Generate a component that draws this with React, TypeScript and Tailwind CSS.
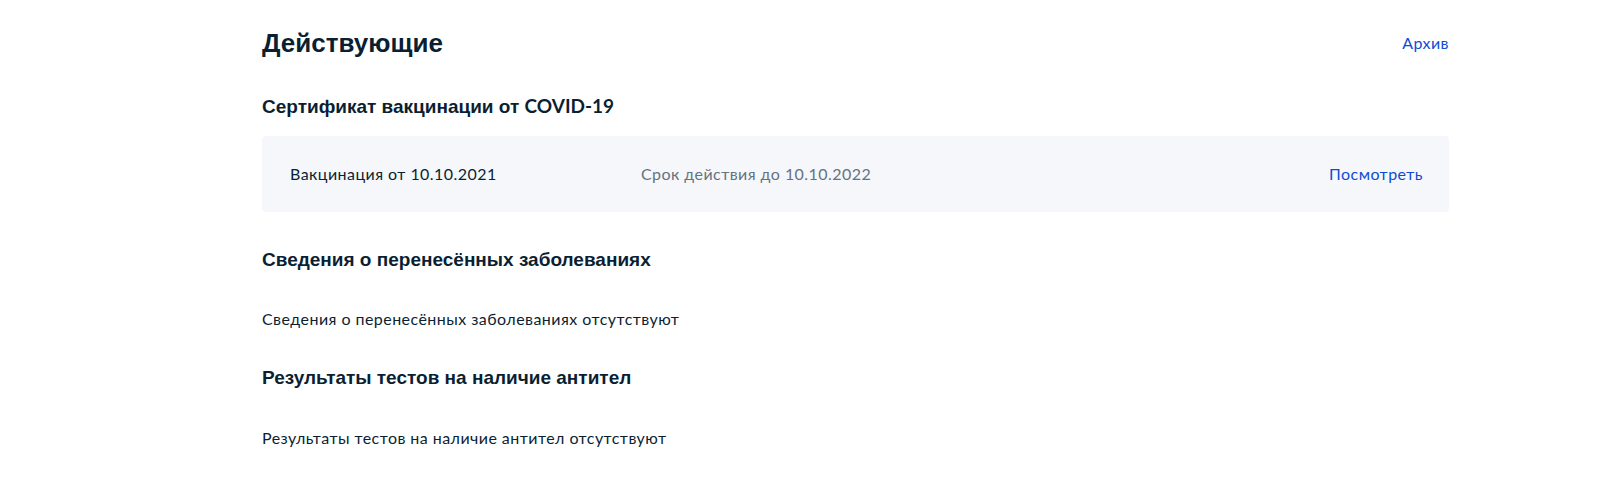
const lato = { fontFamily: "Lato, 'Noto Sans', sans-serif" }
const arial = { fontFamily: "'Liberation Sans', Arial, sans-serif" }

const Section = ({ title, text, gap, textGap }: { title: string; text: string; gap: string; textGap: string }) => (
  <div className={gap}>
    <h3 className="text-[19px] leading-[24px] font-bold text-[#0b1f33]" style={arial}>
      {title}
    </h3>
    <p className={`${textGap} text-[16px] leading-[24px] tracking-[0.45px] text-[#0b1f33]`}>{text}</p>
  </div>
)

export default function App() {
  return (
    <div className="min-h-[482px] bg-white" style={lato}>
      <div className="ml-[262px] w-[1187px] pt-[27px]">
        <div className="flex items-center justify-between">
          <h2 className="text-[26px] leading-[32px] font-bold text-[#0b1f33]" style={arial}>
            Действующие
          </h2>
          <a href="#" className="text-[16px] leading-[24px] tracking-[0.45px] text-[#0d4cd3]">
            Архив
          </a>
        </div>

        <div className="mt-[35px]">
          <h3 className="text-[19px] leading-[24px] font-bold text-[#0b1f33]" style={arial}>
            Сертификат вакцинации от <span style={lato}>COVID-19</span>
          </h3>
          <div className="mt-[17px] flex items-center rounded-[4px] bg-[#f5f7fa] py-[26px] pl-[28px] pr-[26px] text-[16px] leading-[24px] tracking-[0.45px]">
            <span className="w-[351px] text-[#0b1f33]">Вакцинация от 10.10.2021</span>
            <span className="flex-1 text-[#66727f]">Срок действия до 10.10.2022</span>
            <a href="#" className="text-[#0d4cd3]">
              Посмотреть
            </a>
          </div>
        </div>

        <Section
          gap="mt-[36px]"
          textGap="mt-[35px]"
          title="Сведения о перенесённых заболеваниях"
          text="Сведения о перенесённых заболеваниях отсутствуют"
        />
        <Section
          gap="mt-[35px]"
          textGap="mt-[36px]"
          title="Результаты тестов на наличие антител"
          text="Результаты тестов на наличие антител отсутствуют"
        />
      </div>
    </div>
  )
}
